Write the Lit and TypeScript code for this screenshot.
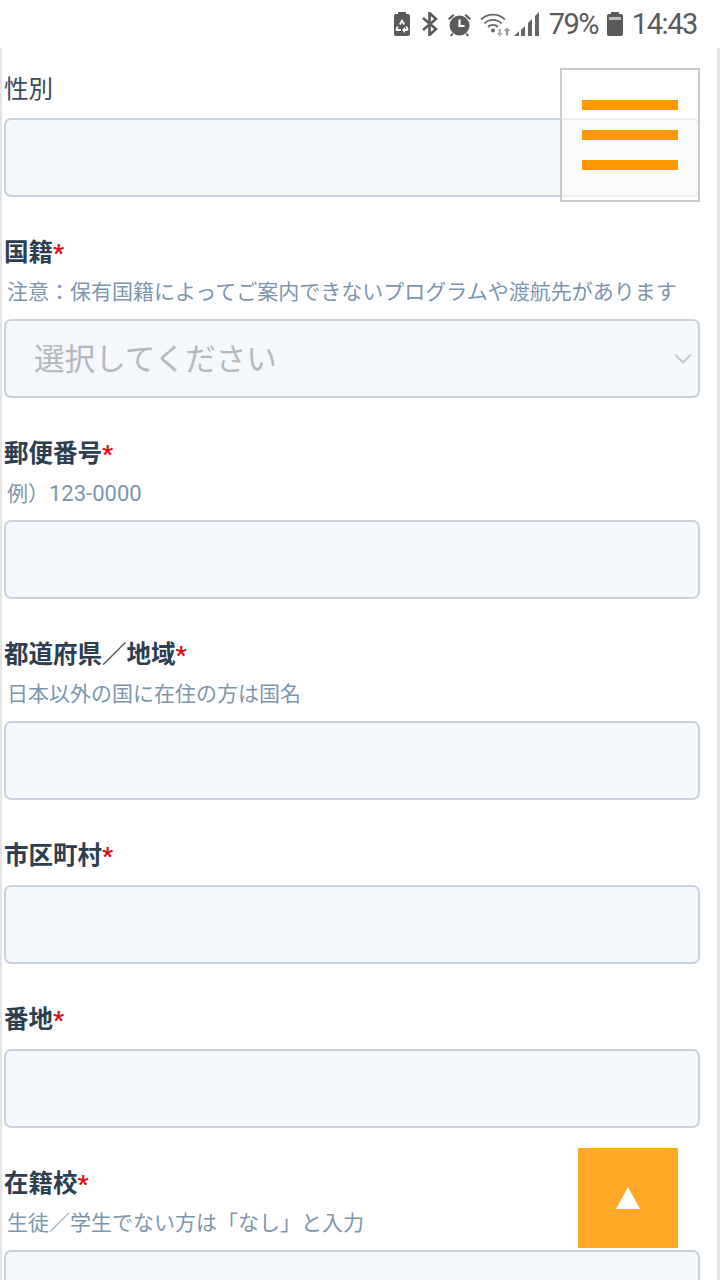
import { LitElement, html, css, nothing } from 'lit';
import { customElement } from 'lit/decorators.js';

const fields = [
  { label: '性別', plain: true },
  { label: '国籍', hint: html`注意：保有国籍によってご案内できないプログラムや渡航先があります`, select: true },
  { label: '郵便番号', hint: html`例）<span class="num">123-0000</span>` },
  { label: '都道府県／地域', hint: html`日本以外の国に在住の方は国名` },
  { label: '市区町村' },
  { label: '番地' },
  { label: '在籍校', hint: html`生徒／学生でない方は「なし」と入力` },
];

@customElement('app-root')
export class AppRoot extends LitElement {
  static styles = css`
    :host {
      display: block;
      position: relative;
      height: 1280px;
      overflow: hidden;
      background: #fff;
      font-family: Roboto, 'Noto Sans CJK JP', sans-serif;
    }

    .status {
      height: 48px;
      display: flex;
      justify-content: flex-end;
      align-items: center;
      padding-right: 23px;
      color: #5a5a5a;
      font-size: 29px;
      box-sizing: border-box;
    }

    .status svg {
      display: block;
      fill: #5a5a5a;
      flex: none;
    }

    .pct {
      margin: 0 9px 0 10px;
      letter-spacing: -1.6px;
    }

    .time {
      margin-left: 9px;
      letter-spacing: -1.4px;
    }

    .page {
      border-left: 2px solid #e4e4e4;
      border-right: 3px solid #e4e4e4;
      padding: 23px 17px 0 2px;
      height: 1232px;
      box-sizing: border-box;
    }

    .field {
      margin-bottom: 38px;
    }

    .label {
      height: 36px;
      line-height: 36px;
      font-size: 24.5px;
      font-weight: 700;
      color: #2c3e50;
    }

    .label.plain {
      line-height: 38px;
      font-weight: 400;
      color: #3d4a57;
    }

    .req {
      color: #d9101a;
    }

    .hint {
      height: 31px;
      line-height: 31px;
      padding: 6px 0 0 3px;
      font-size: 21px;
      color: #7d96ad;
      white-space: nowrap;
    }

    .num {
      font-size: 22px;
    }

    .control {
      position: relative;
      margin-top: 11px;
      height: 79px;
      box-sizing: border-box;
      background: #f4f7fb;
      border: 2px solid #c9d3dd;
      border-radius: 7px;
      display: flex;
      align-items: center;
      padding: 0 0 3px 28px;
      font-size: 30.6px;
      color: #b4b9be;
    }

    .chevron {
      position: absolute;
      right: 6px;
      top: 32px;
    }

    .menu {
      position: absolute;
      left: 560px;
      top: 68px;
      width: 140px;
      height: 134px;
      box-sizing: border-box;
      border: 2px solid #c8cccf;
      background: rgba(255, 255, 255, 0.65);
      display: flex;
      flex-direction: column;
      justify-content: center;
      align-items: center;
      gap: 20px;
    }

    .menu span {
      width: 96px;
      height: 10px;
      background: #ff9900;
    }

    .to-top {
      position: absolute;
      left: 578px;
      top: 1148px;
      width: 100px;
      height: 100px;
      background: #ffa726;
      display: flex;
      align-items: center;
      justify-content: center;
    }
  `;

  private renderStatus() {
    return html`
      <div class="status">
        <svg width="16" height="24" viewBox="0 0 16 24" style="margin-right:12px">
          <path d="M4 0h8v2h2a2 2 0 0 1 2 2v18a2 2 0 0 1-2 2H2a2 2 0 0 1-2-2V4a2 2 0 0 1 2-2h2z" />
          <path d="M8 7l3 5-1.500 1-1.500-2.500L6.500 13 5 12zM3 14l1.500 1-1 2H7v2H3a1.500 1.500 0 0 1-1.300-2.200zM13 14l1.300 2.800A1.500 1.500 0 0 1 13 19h-2v2l-3-3 3-3v2h1.500l-1-2z" fill="#fff" />
        </svg>
        <svg width="16" height="24" viewBox="0 0 16 24" style="margin-right:9px">
          <path d="M1 6l13 11-6.500 6V1L14 7 1 18" fill="none" stroke="#5a5a5a" stroke-width="2.600" />
        </svg>
        <svg width="25" height="25" viewBox="0 0 25 25" style="margin-right:8px">
          <circle cx="12.500" cy="13.500" r="10" />
          <path d="M1 6.500L6 2l1.500 1.500-5 4.500zM24 6.500L19 2l-1.500 1.500 5 4.500zM5 21l-2 2.500 1.500 1 2-2.500zM20 21l2 2.500-1.500 1-2-2.500z" />
          <path d="M12.500 7.500v6.500h5" fill="none" stroke="#fff" stroke-width="2.200" />
        </svg>
        <svg width="31" height="25" viewBox="0 0 31 25" style="margin-right:3px">
          <path d="M1 7.500a17 17 0 0 1 24 0M4.500 11.500a12 12 0 0 1 17 0M8 15a7 7 0 0 1 10 0" fill="none" stroke="#6a6a6a" stroke-width="1.800" />
          <circle cx="13" cy="18.500" r="2" fill="#6a6a6a" />
          <path d="M18.500 17h2.500v4h2l-3.200 3.500-3.200-3.500h2z" fill="#b5b5b5" />
          <path d="M27 15.500l3.200 3.500h-2v4.500h-2.400V19h-2z" fill="#9a9a9a" />
        </svg>
        <svg width="25" height="24" viewBox="0 0 25 24">
          <path d="M0 24h5v-5zM7 24h4V14l-4 4zM14 24h4V7l-4 4zM21 24h4V0l-4 4z" fill="#666" />
        </svg>
        <span class="pct">79%</span>
        <svg width="16" height="24" viewBox="0 0 16 24">
          <path d="M4 0h8v2h2a2 2 0 0 1 2 2v18a2 2 0 0 1-2 2H2a2 2 0 0 1-2-2V4a2 2 0 0 1 2-2h2z" />
          <rect x="2" y="5" width="12" height="3" fill="#bdbdbd" />
        </svg>
        <span class="time">14:43</span>
      </div>
    `;
  }

  render() {
    return html`
      ${this.renderStatus()}
      <div class="page">
        ${fields.map(
          (f) => html`
            <div class="field">
              <div class="label ${f.plain ? 'plain' : ''}">
                ${f.label}${f.plain ? nothing : html`<span class="req">*</span>`}
              </div>
              ${f.hint ? html`<div class="hint">${f.hint}</div>` : nothing}
              <div class="control">
                ${f.select
                  ? html`選択してください
                      <svg class="chevron" width="18" height="12" viewBox="0 0 18 12">
                        <path d="M1 1.500l8 8 8-8" fill="none" stroke="#c4c8cc" stroke-width="2" />
                      </svg>`
                  : nothing}
              </div>
            </div>
          `
        )}
      </div>
      <div class="menu"><span></span><span></span><span></span></div>
      <div class="to-top">
        <svg width="24" height="22" viewBox="0 0 24 22"><path d="M12 0l12 22H0z" fill="#fff" /></svg>
      </div>
    `;
  }
}
